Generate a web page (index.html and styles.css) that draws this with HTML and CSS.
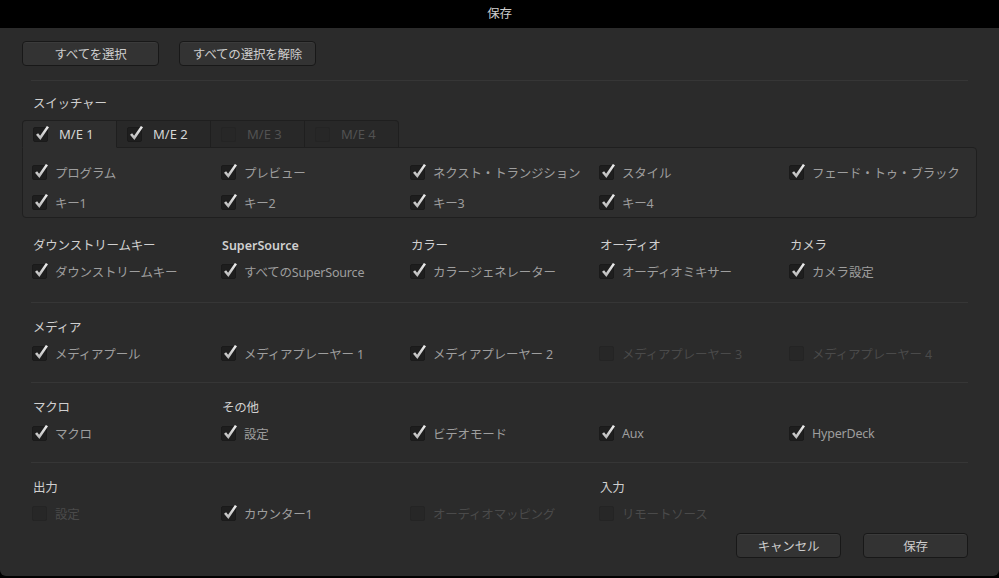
FILE: index.html
```html
<!DOCTYPE html>
<html lang="ja">
<head>
    <meta charset="UTF-8">
    <meta name="viewport" content="width=device-width, initial-scale=1.0">
    <title>保存</title>
    <link rel="stylesheet" href="styles.css">
</head>
<body>
    <svg width="0" height="0" class="defs">
        <defs>
            <linearGradient id="tick-grad" x1="0" y1="0" x2="0" y2="1">
                <stop offset="0" stop-color="#f2f2f2"/>
                <stop offset="1" stop-color="#b4b4b4"/>
            </linearGradient>
            <symbol id="tick" viewBox="0 0 13 16" preserveAspectRatio="none">
                <path d="M0 9.4 L2.1 7.7 L4.1 10.4 L10.9 0 L13 1.3 L4.4 15 Z" fill="url(#tick-grad)"/>
            </symbol>
        </defs>
    </svg>

    <div class="window">
        <div class="titlebar">保存</div>

        <div class="dialog">
            <div class="top-buttons">
                <button class="btn">すべてを選択</button>
                <button class="btn">すべての選択を解除</button>
            </div>

            <div class="divider"></div>

            <!-- Switcher -->
            <div class="switcher">
                <div class="heading">スイッチャー</div>
                <div class="tabs">
                    <div class="tab active"><span class="box checked"><svg><use href="#tick"/></svg></span>M/E 1</div>
                    <div class="tab"><span class="box checked"><svg><use href="#tick"/></svg></span>M/E 2</div>
                    <div class="tab disabled"><span class="box"></span>M/E 3</div>
                    <div class="tab disabled last"><span class="box"></span>M/E 4</div>
                </div>
                <div class="panel">
                    <div class="grid">
                        <div class="item"><span class="box checked"><svg><use href="#tick"/></svg></span>プログラム</div>
                        <div class="item"><span class="box checked"><svg><use href="#tick"/></svg></span>プレビュー</div>
                        <div class="item"><span class="box checked"><svg><use href="#tick"/></svg></span>ネクスト・トランジション</div>
                        <div class="item"><span class="box checked"><svg><use href="#tick"/></svg></span>スタイル</div>
                        <div class="item"><span class="box checked"><svg><use href="#tick"/></svg></span>フェード・トゥ・ブラック</div>
                        <div class="item"><span class="box checked"><svg><use href="#tick"/></svg></span>キー1</div>
                        <div class="item"><span class="box checked"><svg><use href="#tick"/></svg></span>キー2</div>
                        <div class="item"><span class="box checked"><svg><use href="#tick"/></svg></span>キー3</div>
                        <div class="item"><span class="box checked"><svg><use href="#tick"/></svg></span>キー4</div>
                    </div>
                </div>
            </div>

            <!-- Keys / sources -->
            <div class="section first">
                <div class="grid">
                    <div class="heading">ダウンストリームキー</div>
                    <div class="heading latin">SuperSource</div>
                    <div class="heading">カラー</div>
                    <div class="heading">オーディオ</div>
                    <div class="heading">カメラ</div>
                    <div class="item"><span class="box checked"><svg><use href="#tick"/></svg></span>ダウンストリームキー</div>
                    <div class="item"><span class="box checked"><svg><use href="#tick"/></svg></span>すべてのSuperSource</div>
                    <div class="item"><span class="box checked"><svg><use href="#tick"/></svg></span>カラージェネレーター</div>
                    <div class="item"><span class="box checked"><svg><use href="#tick"/></svg></span>オーディオミキサー</div>
                    <div class="item"><span class="box checked"><svg><use href="#tick"/></svg></span>カメラ設定</div>
                </div>
            </div>

            <div class="divider"></div>

            <!-- Media -->
            <div class="section">
                <div class="grid">
                    <div class="heading wide">メディア</div>
                    <div class="item"><span class="box checked"><svg><use href="#tick"/></svg></span>メディアプール</div>
                    <div class="item"><span class="box checked"><svg><use href="#tick"/></svg></span>メディアプレーヤー 1</div>
                    <div class="item"><span class="box checked"><svg><use href="#tick"/></svg></span>メディアプレーヤー 2</div>
                    <div class="item disabled"><span class="box"></span>メディアプレーヤー 3</div>
                    <div class="item disabled"><span class="box"></span>メディアプレーヤー 4</div>
                </div>
            </div>

            <div class="divider"></div>

            <!-- Macros / other -->
            <div class="section">
                <div class="grid">
                    <div class="heading">マクロ</div>
                    <div class="heading">その他</div>
                    <div class="heading"></div>
                    <div class="heading"></div>
                    <div class="heading"></div>
                    <div class="item"><span class="box checked"><svg><use href="#tick"/></svg></span>マクロ</div>
                    <div class="item"><span class="box checked"><svg><use href="#tick"/></svg></span>設定</div>
                    <div class="item"><span class="box checked"><svg><use href="#tick"/></svg></span>ビデオモード</div>
                    <div class="item"><span class="box checked"><svg><use href="#tick"/></svg></span>Aux</div>
                    <div class="item"><span class="box checked"><svg><use href="#tick"/></svg></span>HyperDeck</div>
                </div>
            </div>

            <div class="divider"></div>

            <!-- Output / input -->
            <div class="section last">
                <div class="grid">
                    <div class="heading">出力</div>
                    <div class="heading"></div>
                    <div class="heading"></div>
                    <div class="heading">入力</div>
                    <div class="heading"></div>
                    <div class="item disabled"><span class="box"></span>設定</div>
                    <div class="item"><span class="box checked"><svg><use href="#tick"/></svg></span>カウンター1</div>
                    <div class="item disabled"><span class="box"></span>オーディオマッピング</div>
                    <div class="item disabled"><span class="box"></span>リモートソース</div>
                </div>
            </div>

            <div class="bottom-buttons">
                <button class="btn small">キャンセル</button>
                <button class="btn small">保存</button>
            </div>
        </div>
    </div>
</body>
</html>
```

FILE: styles.css
```css
body {
    margin: 0;
    background-color: #000;
    font-family: 'Noto Sans', 'Noto Sans CJK JP', sans-serif;
    font-size: 12.5px;
    letter-spacing: -0.2px;
    color: #9e9e9e;
}

.defs {
    position: absolute;
}

.window {
    height: 576px;
    background-color: #2b2b2b;
    border-radius: 0 0 6px 6px;
    overflow: hidden;
}

.titlebar {
    height: 28px;
    line-height: 27px;
    background-color: #000;
    color: #cfcfcf;
    text-align: center;
}

.dialog {
    padding: 0 22px;
}

.btn {
    height: 25px;
    width: 137px;
    padding: 0;
    background-color: #333;
    border: 1px solid #181818;
    border-radius: 4px;
    box-shadow: inset 0 1px 0 rgba(255, 255, 255, 0.04);
    color: #cdcdcd;
    font-family: inherit;
    font-size: 12.5px;
    letter-spacing: -0.2px;
}

.btn.small {
    width: 105px;
}

.top-buttons {
    display: flex;
    gap: 20px;
    padding-top: 13px;
}

.divider {
    height: 1px;
    margin: 14px 9px 0;
    background-color: #363636;
}

.heading {
    height: 18px;
    line-height: 18px;
    color: #d0d0d0;
    padding-left: 1px;
}

.heading.latin {
    font-weight: 600;
    letter-spacing: 0;
}

.heading.wide {
    grid-column: 1 / -1;
}

.switcher {
    padding-top: 14px;
}

.switcher > .heading {
    margin-left: 10px;
}

/* tabs */
.tabs {
    display: flex;
    margin-top: 7px;
}

.tab {
    display: flex;
    align-items: center;
    width: 83px;
    height: 26px;
    padding-left: 10px;
    background-color: #282828;
    border: 1px solid #1f1f1f;
    border-left: none;
    color: #d6d6d6;
    font-size: 13px;
    letter-spacing: 0;
    margin-bottom: -1px;
    position: relative;
}

.tab .box {
    margin-right: 11px;
}

.tab.active {
    background-color: #2e2e2e;
    border-left: 1px solid #1f1f1f;
    border-bottom-color: #2e2e2e;
    border-radius: 4px 0 0 0;
    z-index: 1;
}

.tab.last {
    border-radius: 0 4px 0 0;
}

.tab.disabled {
    color: #525252;
}

.panel {
    background-color: #2e2e2e;
    border: 1px solid #1f1f1f;
    border-radius: 0 4px 4px 4px;
    padding: 14px 0 4px 9px;
}

.panel .grid {
    row-gap: 9px;
}

/* rows of check items */
.grid {
    display: grid;
    grid-template-columns: 189px 189px 189px 190px 180px;
    row-gap: 6px;
}

.item {
    display: flex;
    align-items: center;
    height: 21px;
    white-space: nowrap;
}

.item.disabled {
    color: #4a4a4a;
}

.box {
    position: relative;
    flex: none;
    width: 15px;
    height: 15px;
    margin-right: 8px;
    background-color: #1e1e1e;
    border: 1px solid #1a1a1a;
    border-radius: 2px;
    box-sizing: border-box;
}

.item.disabled .box,
.tab.disabled .box {
    background-color: #272727;
    border-color: #242424;
}

.box svg {
    position: absolute;
    left: 2px;
    top: -2px;
    width: 13px;
    height: 15px;
}

.section {
    padding: 16px 0 0 10px;
}

.section.first {
    padding-top: 19px;
}

.section.first + .divider {
    margin-top: 20px;
}

.section + .divider {
    margin-top: 18px;
}

.bottom-buttons {
    display: flex;
    justify-content: flex-end;
    gap: 22px;
    margin-top: 9px;
    padding-right: 9px;
}
```
